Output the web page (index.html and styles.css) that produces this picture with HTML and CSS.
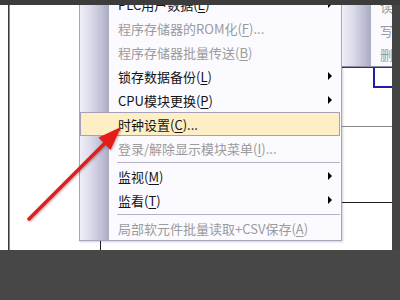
FILE: index.html
```html
<!DOCTYPE html>
<html lang="zh-CN">
<head>
<meta charset="utf-8">
<title>PLC 在线菜单</title>
<link rel="stylesheet" href="styles.css">
</head>
<body>
<div class="screen">
  <div class="titlebar"></div>
  <div class="main">
    <div class="canvas">
      <div class="gutter"></div>
      <div class="rail"></div>
      <div class="mid"><div class="stub"></div></div>
      <div class="col">
        <div class="rung rung1"></div>
        <div class="cursor"></div>
        <div class="rung rung2"></div>
        <div class="rung rung3"></div>
      </div>

      <div class="menu">
        <div class="item">PLC用户数据(<u>E</u>)<span class="arrow"></span></div>
        <div class="item off">程序存储器的ROM化(<u>F</u>)...</div>
        <div class="item off">程序存储器批量传送(<u>B</u>)</div>
        <div class="item">锁存数据备份(<u>L</u>)<span class="arrow"></span></div>
        <div class="item">CPU模块更换(<u>P</u>)<span class="arrow"></span></div>
        <div class="item hot">时钟设置(<u>C</u>)...</div>
        <div class="item off">登录/解除显示模块菜单(<u>I</u>)...</div>
        <div class="sep"></div>
        <div class="item">监视(<u>M</u>)<span class="arrow"></span></div>
        <div class="item">监看(<u>T</u>)<span class="arrow"></span></div>
        <div class="sep"></div>
        <div class="item off">局部软元件批量读取+CSV保存(<u>A</u>)</div>
      </div>

      <div class="submenu">
        <div class="item off">读取(<u>R</u>)...</div>
        <div class="item off">写入(<u>W</u>)...</div>
        <div class="item off">删除(<u>D</u>)...</div>
      </div>
    </div>
    <div class="side-dark"></div>
  </div>
  <div class="bottom-dark"></div>

  <svg class="annot" width="400" height="300" viewBox="0 0 400 300">
    <line x1="29" y1="219" x2="106" y2="142" stroke="#e41d1b" stroke-width="3.5" stroke-linecap="round"/>
    <polygon points="121,127 98.5,137.5 110.5,150" fill="#e41d1b"/>
  </svg>
</div>
</body>
</html>
```

FILE: styles.css
```css
html, body {
  margin: 0;
  padding: 0;
}
body {
  background: #464646;
  font-family: "Noto Sans CJK SC", "Noto Sans", sans-serif;
}
.screen {
  position: relative;
  width: 400px;
  height: 300px;
  overflow: hidden;
}
.titlebar {
  height: 5px;
  background: #3c3c3c;
}
.main {
  display: flex;
  height: 245px;
}
.canvas {
  position: relative;
  width: 392px;
  height: 245px;
  background: #ffffff;
  overflow: hidden;
  display: flex;
}
.side-dark {
  flex: 1;
  background: #444444;
}
.bottom-dark {
  height: 50px;
  background: #474747;
}
.gutter {
  width: 8px;
}
.rail {
  width: 2px;
  background: linear-gradient(to right, #3a3a3a 50%, #8c8c8c 50%);
}
.mid {
  width: 332px;
  display: flex;
  flex-direction: column;
  justify-content: flex-end;
}
.stub {
  margin-left: 90px;
  width: 1px;
  height: 10px;
  background: #222;
}
.col {
  width: 50px;
  display: flex;
  flex-direction: column;
}
.rung {
  height: 1px;
}
.rung1 {
  margin-top: 62px;
  background: #3a3a3a;
}
.cursor {
  margin-left: 31px;
  height: 20px;
  border-left: 2px solid #1f1fa6;
  border-bottom: 2px solid #1f1fa6;
  box-sizing: border-box;
}
.rung2 {
  margin-top: 38px;
  background: #8a8a8a;
}
.rung3 {
  margin-top: 75px;
  background: #1e1e1e;
}

/* popup menus */
.menu, .submenu {
  position: absolute;
  box-sizing: border-box;
  font-size: 13px;
  background-color: #fafaff;
  background-image: linear-gradient(to right, #efeff8 0, #dadaea 11px, #bebed4 22px, #a9a9c2 29px, #fafaff 29px);
}
.menu {
  left: 79px;
  top: -14px;
  width: 263px;
  border: 1px solid #a6a3bc;
  padding: 0 1px 0 0;
  box-shadow: 1px 1px 2px rgba(0, 0, 0, 0.18);
}
.submenu {
  left: 342px;
  top: -12px;
  width: 120px;
  border-top: 1px solid #a6a3bc;
  border-bottom: 1px solid #8f8ca6;
}
.item {
  height: 24px;
  display: flex;
  align-items: center;
  padding-left: 38px;
  color: #141414;
  white-space: nowrap;
  box-sizing: border-box;
}
.item u {
  text-underline-offset: 2px;
}
.item.off {
  color: #9b9b9b;
}
.item.hot {
  background: #fdeec6;
  border: 1px solid #a5a1bb;
  padding-left: 37px;
}
.arrow {
  margin-left: auto;
  margin-right: 8px;
  width: 0;
  height: 0;
  border-top: 4px solid transparent;
  border-bottom: 4px solid transparent;
  border-left: 4px solid #000;
}
.sep {
  height: 1px;
  margin: 2px 0 1px 37px;
  background: #b4b1c6;
}

/* annotation arrow */
.annot {
  position: absolute;
  left: 0;
  top: 0;
  pointer-events: none;
  filter: drop-shadow(1px 1px 1px rgba(90, 0, 0, 0.35));
}
```
